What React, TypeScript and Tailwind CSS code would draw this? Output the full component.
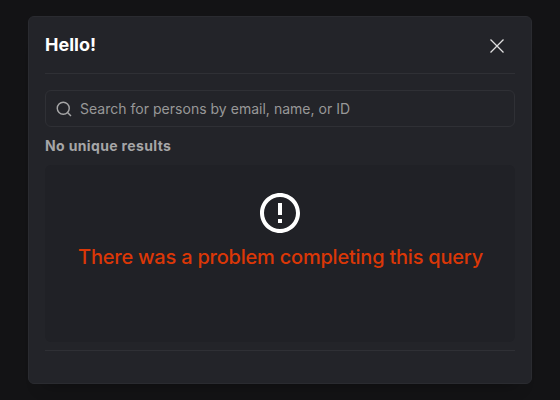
export default function App() {
  return (
    <div className="flex h-[400px] w-[560px] items-center justify-center bg-[#131315] font-['Inter',sans-serif]">
      <section className="flex h-[368px] w-[504px] flex-col rounded-md border border-[#2a2b30] bg-[#232429] px-4 shadow-[0_16px_16px_-16px_rgba(0,0,0,0.35)]">
        <header className="flex h-[57px] shrink-0 items-center justify-between border-b border-[#2f3035] pr-1.5">
          <h3 className="text-[18px] leading-6 font-bold text-white">Hello!</h3>
          <button type="button" aria-label="close" className="flex size-6 items-center justify-center pt-[2px] text-[#e0e0e0]">
            <svg width="20" height="20" viewBox="0 0 20 20" fill="none" stroke="currentColor" strokeWidth="1.3">
              <path d="M3.5 3.5L16.5 16.5M16.5 3.5L3.5 16.5" />
            </svg>
          </button>
        </header>
        <div className="mt-4 flex h-[37px] shrink-0 items-center gap-[7px] rounded-md border border-[#2f3035] px-[9px] text-[#989898]">
          <svg className="shrink-0" width="18" height="18" viewBox="0 0 24 24" fill="none" stroke="#a6a6a7" strokeWidth="1.9">
            <circle cx="11" cy="11" r="8" />
            <path d="M16.7 16.7L21.3 21.3" />
          </svg>
          <span className="text-sm tracking-[0.02px]">Search for persons by email, name, or ID</span>
        </div>
        <div className="mt-2 text-sm leading-[22px] font-bold tracking-[0.36px] text-[#a6a6a7]">No unique results</div>
        <div className="mt-2 flex h-[177px] shrink-0 flex-col items-center rounded-md bg-[#202126] pt-6 text-center">
          <svg width="48" height="48" viewBox="0 0 24 24" fill="#fff">
            <path d="M11 15h2v2h-2zm0-8h2v6h-2zm.99-5C6.47 2 2 6.48 2 12s4.47 10 9.99 10C17.52 22 22 17.52 22 12S17.52 2 11.99 2zM12 20c-4.42 0-8-3.58-8-8s3.58-8 8-8 8 3.58 8 8-3.58 8-8 8z" />
          </svg>
          <h2 className="mt-1.5 pl-px text-xl leading-7 font-medium tracking-[-0.22px] text-[#db3707]">There was a problem completing this query</h2>
        </div>
        <footer className="mt-2 border-t border-[#2f3035]" />
      </section>
    </div>
  );
}
